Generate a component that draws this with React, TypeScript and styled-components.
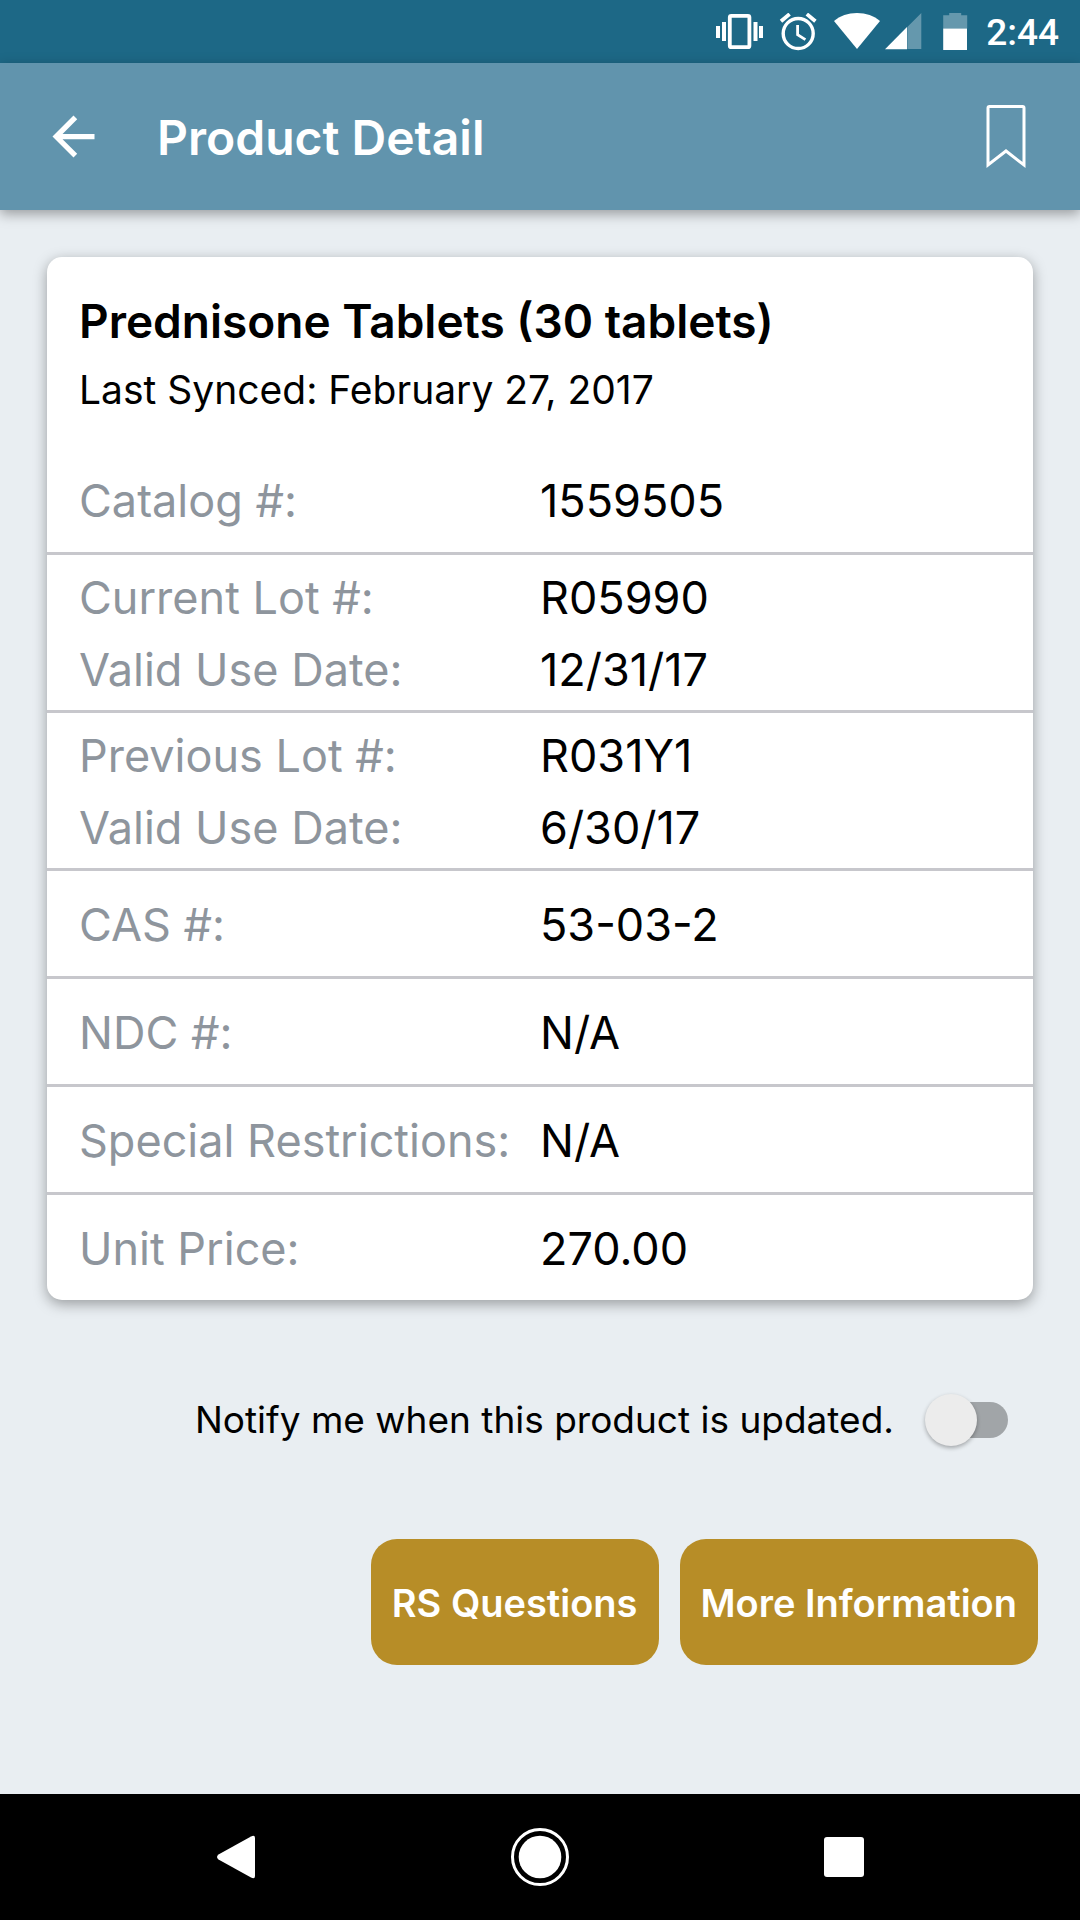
import React, { useState } from "react";
import styled, { createGlobalStyle } from "styled-components";

const GlobalStyle = createGlobalStyle`
  *, *::before, *::after { box-sizing: border-box; }
  body {
    margin: 0;
    background: #e9eef2;
    color: #000;
    font-family: Inter, Roboto, "Liberation Sans", sans-serif;
  }
  button { font-family: inherit; }
`;

const Screen = styled.div`
  min-height: 100vh;
  display: flex;
  flex-direction: column;
`;

const StatusBar = styled.div`
  height: 63px;
  padding: 0 21px;
  display: flex;
  align-items: center;
  justify-content: flex-end;
  background: #1d6886;
  color: #fff;
`;

const StatusIcons = styled.svg`
  display: block;
  margin-right: 18px;
`;

const Clock = styled.time`
  font: 500 37px/63px Roboto, sans-serif;
  padding-top: 2px;
`;

const AppBar = styled.header`
  height: 147px;
  padding: 0 42px;
  display: flex;
  align-items: center;
  background: #6194ad;
  color: #fff;
  box-shadow: 0 4px 12px rgba(0, 0, 0, 0.35);
`;

const IconButton = styled.button`
  display: flex;
  padding: 0;
  border: 0;
  background: none;
  color: inherit;
  cursor: pointer;
`;

const AppTitle = styled.h1`
  flex: 1;
  margin: 0 0 0 52px;
  padding-top: 2px;
  font-size: 48px;
  line-height: 60px;
  font-weight: 600;
`;

const Content = styled.main`
  flex: 1;
  padding: 47px 47px 0;
`;

const Card = styled.section`
  background: #fff;
  border-radius: 15px;
  box-shadow: 0 4px 14px rgba(0, 0, 0, 0.35);
`;

const CardHeader = styled.div`
  padding: 32px 32px 21px;
`;

const ProductName = styled.h2`
  margin: 0;
  font-size: 46px;
  line-height: 65px;
  font-weight: 600;
`;

const Synced = styled.p`
  margin: 0;
  font-size: 39px;
  line-height: 72px;
`;

const Details = styled.dl`
  margin: 0;
`;

const Group = styled.div<{ $compact: boolean }>`
  padding: ${(p) => (p.$compact ? "7px 0 4px" : "18px 0 15px")};
  & + & { border-top: 3px solid #c7c7cc; }
`;

const Field = styled.div`
  display: grid;
  grid-template-columns: 1fr 1fr;
  font-size: 45px;
  line-height: 72px;
`;

const Label = styled.dt`
  padding-left: 32px;
  color: #8e959d;
  white-space: nowrap;
`;

const Value = styled.dd`
  margin: 0;
`;

const NotifyRow = styled.label`
  margin-top: 84px;
  padding-right: 25px;
  display: flex;
  align-items: center;
  justify-content: flex-end;
  gap: 31px;
  font-size: 37px;
  line-height: 72px;
`;

const Switch = styled.input`
  appearance: none;
  margin: 0;
  width: 83px;
  height: 52px;
  display: flex;
  align-items: center;
  position: relative;
  cursor: pointer;

  &::before {
    content: "";
    flex: 1;
    height: 36px;
    margin-left: 10px;
    border-radius: 18px;
    background: #a1a5a8;
  }
  &::after {
    content: "";
    position: absolute;
    top: 0;
    left: 0;
    width: 52px;
    height: 52px;
    border-radius: 50%;
    background: #ececec;
    box-shadow: 0 2px 4px rgba(0, 0, 0, 0.3);
  }
  &:checked::before { background: #8ab4c8; }
  &:checked::after { left: 31px; background: #1d6886; }
`;

const Actions = styled.div`
  margin: 83px -5px 40px 0;
  display: flex;
  justify-content: flex-end;
  gap: 21px;
`;

const ActionButton = styled.button`
  height: 126px;
  padding: 2px 21px 0;
  border: 0;
  border-radius: 26px;
  background: #b78d27;
  color: #fff;
  font-size: 38px;
  font-weight: 600;
  white-space: nowrap;
  cursor: pointer;
`;

const NavBar = styled.nav`
  height: 126px;
  display: flex;
  align-items: center;
  justify-content: center;
  gap: 244px;
  background: #000;
  color: #fff;
`;

const groups: [string, string][][] = [
  [["Catalog #:", "1559505"]],
  [["Current Lot #:", "R05990"], ["Valid Use Date:", "12/31/17"]],
  [["Previous Lot #:", "R031Y1"], ["Valid Use Date:", "6/30/17"]],
  [["CAS #:", "53-03-2"]],
  [["NDC #:", "N/A"]],
  [["Special Restrictions:", "N/A"]],
  [["Unit Price:", "270.00"]],
];

function DeviceStatus() {
  return (
    <StatusIcons width="252" height="38" viewBox="716 13 252 38" fill="#fff" aria-hidden="true">
      <path d="M716 26h4v12h-4zM722 22h4v19h-4zM753.5 22h4v19h-4zM759 26h4v12h-4z" />
      <rect x="729.8" y="15.8" width="19.6" height="31.4" rx="1.5" fill="none" stroke="#fff" strokeWidth="3.8" />
      <g fill="none" stroke="#fff" strokeWidth="3.4">
        <circle cx="798.2" cy="33.5" r="15" />
        <path d="M781 21.3l8.6-7.2M815.4 21.3l-8.6-7.2" strokeWidth="3.8" />
        <path d="M797.6 25v9.8l7.8 4.8" strokeWidth="2.8" />
      </g>
      <path d="M857 49L834 21C840 15.800 848 13 857 13s17 2.800 23 8z" />
      <path d="M921.300 13v36h-14V27z" opacity=".32" />
      <path d="M907 27v22.200h-22z" />
      <path d="M943.200 28.500V15.200h6v-2.200h12v2.200h6v13.300z" opacity=".32" />
      <path d="M943.200 28.500h23.800V50h-23.800z" />
    </StatusIcons>
  );
}

export default function App() {
  const [notify, setNotify] = useState(false);
  return (
    <Screen>
      <GlobalStyle />
      <StatusBar>
        <DeviceStatus />
        <Clock>2:44</Clock>
      </StatusBar>
      <AppBar>
        <IconButton aria-label="Back">
          <svg width="63" height="63" viewBox="0 0 24 24" fill="currentColor">
            <path d="M20 11H7.830l5.590-5.590L12 4l-8 8 8 8 1.410-1.410L7.830 13H20v-2z" />
          </svg>
        </IconButton>
        <AppTitle>Product Detail</AppTitle>
        <IconButton aria-label="Bookmark">
          <svg width="64" height="64" viewBox="0 1 64 64" fill="none" stroke="currentColor" strokeWidth="3">
            <path d="M14 4Q14 2.500 15.500 2.500H48.500Q50 2.500 50 4V61L32 47L14 61z" />
          </svg>
        </IconButton>
      </AppBar>
      <Content>
        <Card>
          <CardHeader>
            <ProductName>Prednisone Tablets (30 tablets)</ProductName>
            <Synced>Last Synced: February 27, 2017</Synced>
          </CardHeader>
          <Details>
            {groups.map((fields, i) => (
              <Group key={i} $compact={fields.length > 1}>
                {fields.map(([label, value]) => (
                  <Field key={label}>
                    <Label>{label}</Label>
                    <Value>{value}</Value>
                  </Field>
                ))}
              </Group>
            ))}
          </Details>
        </Card>
        <NotifyRow>
          Notify me when this product is updated.
          <Switch
            type="checkbox"
            role="switch"
            checked={notify}
            onChange={(e) => setNotify(e.target.checked)}
          />
        </NotifyRow>
        <Actions>
          <ActionButton>RS Questions</ActionButton>
          <ActionButton>More Information</ActionButton>
        </Actions>
      </Content>
      <NavBar>
        <IconButton aria-label="System back">
          <svg width="60" height="60" viewBox="0 0 60 60" fill="currentColor">
            <path d="M12.500 27.500L45 9.500Q49 7.500 49 11V49Q49 52.500 45 50.500L12.500 32.500Q9.500 30 12.500 27.500z" />
          </svg>
        </IconButton>
        <IconButton aria-label="Home">
          <svg width="60" height="60" viewBox="0 0 60 60" fill="currentColor">
            <circle cx="30" cy="30" r="27.500" fill="none" stroke="currentColor" strokeWidth="3" />
            <circle cx="30" cy="30" r="21.300" />
          </svg>
        </IconButton>
        <IconButton aria-label="Recent apps">
          <svg width="60" height="60" viewBox="0 0 60 60" fill="currentColor">
            <rect x="10" y="10" width="40" height="40" rx="3" />
          </svg>
        </IconButton>
      </NavBar>
    </Screen>
  );
}
